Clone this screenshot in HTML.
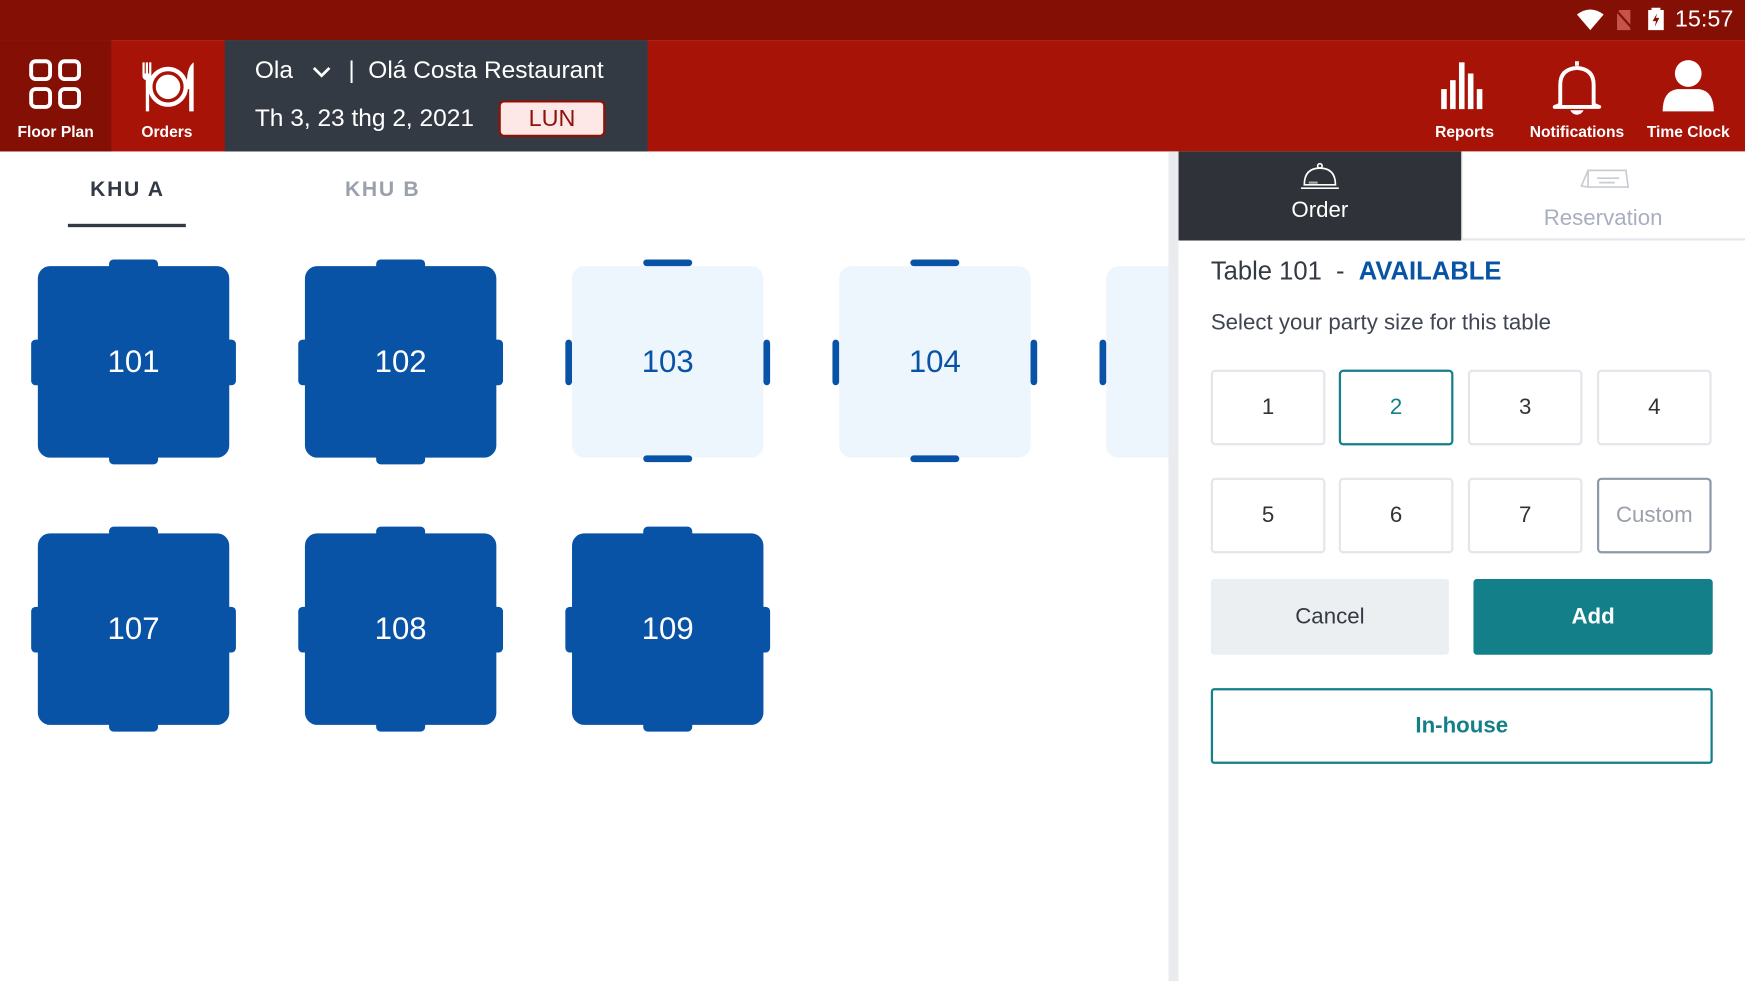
<!DOCTYPE html>
<html><head><meta charset="utf-8"><style>
*{margin:0;padding:0;box-sizing:border-box}
html,body{width:1745px;height:981px;overflow:hidden;background:#fff}
#w{position:absolute;left:0;top:0;width:1568px;height:881px;transform:scale(1.11288,1.1135);transform-origin:0 0;font-family:"Liberation Sans",sans-serif}
.a{position:absolute}
.sb{left:0;top:0;width:1568px;height:36px;background:#830f05}
.top{left:0;top:36px;width:1568px;height:100px;background:#a81308}
.nav{color:#fff;font-size:14px;font-weight:bold;text-align:center}
.t{position:absolute;width:184px;height:184px}
.t .b{position:absolute;left:6px;top:6px;width:172px;height:172px;border-radius:11px;background:#0953a6}
.t .n{position:absolute;background:#0953a6;border-radius:4px}
.t .l{color:#fff;position:absolute;left:0;top:0;width:184px;height:184px;line-height:184px;text-align:center;font-size:28px}
.t.lt .b{background:#eef6fd}
.t.lt .l{color:#0953a6}
.btn{position:absolute;width:103px;height:68px;border:2px solid #e3e6ea;border-radius:4px;text-align:center;line-height:64px;font-size:20px;color:#333}
</style></head><body><div id="w">
<div class="a sb"></div>
<svg class="a" style="left:1416px;top:8px" width="26" height="20" viewBox="0 0 26 20"><path d="M1 5Q13-4 25 5L13 19Z" fill="#fff"/></svg>
<svg class="a" style="left:1451px;top:8px" width="18" height="20" viewBox="0 0 18 20"><path d="M4 1H14V19H2V4Z" fill="#c5544a"/><path d="M1 1L17 19" stroke="#830f05" stroke-width="2"/></svg>
<svg class="a" style="left:1480px;top:6px" width="16" height="22" viewBox="0 0 16 22"><path d="M4 1H12V3H15V21H1V3H4Z" fill="#fff"/><path d="M9 6L5 13H8L7 18L11 10H8Z" fill="#830f05"/></svg>
<div class="a" style="left:1505px;top:6px;color:#fff;font-size:21px">15:57</div>
<div class="a top"></div>
<div class="a" style="left:0;top:36px;width:100px;height:100px;background:#830f05"></div>
<svg class="a" style="left:26px;top:53px" width="48" height="46" viewBox="0 0 48 46"><g fill="none" stroke="#fff" stroke-width="3.5"><rect x="2" y="2" width="17" height="16" rx="4"/><rect x="28" y="2" width="17" height="16" rx="4"/><rect x="2" y="27" width="17" height="16" rx="4"/><rect x="28" y="27" width="17" height="16" rx="4"/></g></svg>
<div class="a nav" style="left:0;top:110px;width:100px">Floor Plan</div>
<svg class="a" style="left:126px;top:54px" width="50" height="48" viewBox="0 0 50 48"><g fill="#fff"><path d="M2 2h2v10h1V2h2v10h1V2h2v12q0 3-2 4v28H5V18q-3-1-3-4z"/><circle cx="25" cy="24" r="16" fill="none" stroke="#fff" stroke-width="4"/><circle cx="25" cy="24" r="11"/><path d="M42 20q0-14 6-18v44h-4V26h-2z"/></g></svg>
<div class="a nav" style="left:100px;top:110px;width:100px">Orders</div>
<div class="a" style="left:202px;top:36px;width:380px;height:100px;background:#343a44"></div>
<div class="a" style="left:229px;top:50px;color:#fff;font-size:22px">Ola</div>
<svg class="a" style="left:280px;top:59px" width="18" height="12" viewBox="0 0 18 12"><path d="M2 2l7 7 7-7" fill="none" stroke="#fff" stroke-width="2.5"/></svg>
<div class="a" style="left:313px;top:50px;color:#fff;font-size:22px">|&nbsp;&nbsp;Olá Costa Restaurant</div>
<div class="a" style="left:229px;top:93px;color:#fff;font-size:22px">Th 3, 23 thg 2, 2021</div>
<div class="a" style="left:448px;top:90px;width:96px;height:33px;background:#fde8e7;border:2px solid #8f1208;border-radius:5px;color:#8f1208;font-size:21px;text-align:center;line-height:29px">LUN</div>
<svg class="a" style="left:1293px;top:52px" width="48" height="48" viewBox="0 0 48 48"><g fill="#fff"><rect x="2" y="28" width="5" height="18"/><rect x="10" y="20" width="5" height="26"/><rect x="18" y="4" width="5" height="42"/><rect x="26" y="14" width="5" height="32"/><rect x="34" y="28" width="5" height="18"/><rect x="40" y="18" width="5" height="28" opacity="0"/></g></svg>
<div class="a nav" style="left:1276px;top:110px;width:80px">Reports</div>
<svg class="a" style="left:1394px;top:52px" width="46" height="52" viewBox="0 0 46 52"><path d="M23 3v4M8 42V24q0-14 15-15 15 1 15 15v18l5 2H3z" fill="none" stroke="#fff" stroke-width="3.5" stroke-linejoin="round"/><path d="M17 47h12q-2 4-6 4t-6-4z" fill="#fff"/></svg>
<div class="a nav" style="left:1367px;top:110px;width:100px">Notifications</div>
<svg class="a" style="left:1492px;top:52px" width="50" height="50" viewBox="0 0 50 50"><circle cx="25" cy="14" r="12" fill="#fff"/><path d="M2 48q0-18 13-20h20q13 2 13 20z" fill="#fff"/></svg>
<div class="a nav" style="left:1467px;top:110px;width:100px">Time Clock</div>

<div class="a" style="left:81px;top:160px;font-size:19px;font-weight:bold;color:#343a44;letter-spacing:1.5px">KHU A</div>
<div class="a" style="left:61px;top:201px;width:106px;height:3px;background:#343a44"></div>
<div class="a" style="left:310px;top:160px;font-size:19px;font-weight:bold;color:#9aa1ab;letter-spacing:1.5px">KHU B</div>

<div class="t" style="left:28px;top:233px"><div class="b"></div><div class="n" style="left:70px;top:0;width:44px;height:184px"></div><div class="n" style="left:0;top:72px;width:184px;height:41px"></div><div class="l">101</div></div>
<div class="t" style="left:268px;top:233px"><div class="b"></div><div class="n" style="left:70px;top:0;width:44px;height:184px"></div><div class="n" style="left:0;top:72px;width:184px;height:41px"></div><div class="l">102</div></div>
<div class="t lt" style="left:508px;top:233px"><div class="b"></div><div class="n" style="left:70px;top:0;width:44px;height:6px"></div><div class="n" style="left:70px;top:176px;width:44px;height:6px"></div><div class="n" style="left:0;top:72px;width:6px;height:41px"></div><div class="n" style="left:178px;top:72px;width:6px;height:41px"></div><div class="l">103</div></div>
<div class="t lt" style="left:748px;top:233px"><div class="b"></div><div class="n" style="left:70px;top:0;width:44px;height:6px"></div><div class="n" style="left:70px;top:176px;width:44px;height:6px"></div><div class="n" style="left:0;top:72px;width:6px;height:41px"></div><div class="n" style="left:178px;top:72px;width:6px;height:41px"></div><div class="l">104</div></div>
<div class="t lt" style="left:988px;top:233px"><div class="b"></div><div class="n" style="left:0;top:72px;width:6px;height:41px"></div></div>
<div class="t" style="left:28px;top:473px"><div class="b"></div><div class="n" style="left:70px;top:0;width:44px;height:184px"></div><div class="n" style="left:0;top:72px;width:184px;height:41px"></div><div class="l">107</div></div>
<div class="t" style="left:268px;top:473px"><div class="b"></div><div class="n" style="left:70px;top:0;width:44px;height:184px"></div><div class="n" style="left:0;top:72px;width:184px;height:41px"></div><div class="l">108</div></div>
<div class="t" style="left:508px;top:473px"><div class="b"></div><div class="n" style="left:70px;top:0;width:44px;height:184px"></div><div class="n" style="left:0;top:72px;width:184px;height:41px"></div><div class="l">109</div></div>

<div class="a" style="left:1050px;top:136px;width:9px;height:745px;background:#e9ebee"></div>
<div class="a" style="left:1059px;top:136px;width:509px;height:745px;background:#fff"></div>
<div class="a" style="left:1059px;top:136px;width:254px;height:80px;background:#2f3238"></div>
<div class="a" style="left:1313px;top:136px;width:255px;height:80px;border-bottom:2px solid #e3e6ea;border-left:1px solid #ccc"></div>
<svg class="a" style="left:1168px;top:145px" width="36" height="26" viewBox="0 0 36 26"><g fill="none" stroke="#fff" stroke-width="1.5"><circle cx="18" cy="4" r="2"/><path d="M4 21q0-15 14-15t14 15z"/><path d="M1 24h34"/></g><rect x="8" y="18" width="8" height="2" fill="#aaa"/></svg>
<div class="a" style="left:1059px;top:178px;width:254px;text-align:center;color:#fff;font-size:20px">Order</div>
<svg class="a" style="left:1419px;top:150px" width="46" height="22" viewBox="0 0 46 22"><g fill="none" stroke="#c9ccd2" stroke-width="1.5"><path d="M8 3H42L44 18H8Z"/><path d="M8 3L2 17L8 18"/><path d="M16 10H36M18 14H32"/></g></svg>
<div class="a" style="left:1313px;top:185px;width:255px;text-align:center;color:#a9aec0;font-size:20px">Reservation</div>
<div class="a" style="left:1088px;top:230px;font-size:23px;color:#343a44">Table 101&nbsp;&nbsp;-&nbsp;&nbsp;<span style="color:#0953a6;font-weight:bold">AVAILABLE</span></div>
<div class="a" style="left:1088px;top:279px;font-size:20px;color:#3f4651">Select your party size for this table</div>
<div class="btn" style="left:1088px;top:332px">1</div>
<div class="btn" style="left:1203px;top:332px;border-color:#137f88;color:#137f88">2</div>
<div class="btn" style="left:1319px;top:332px">3</div>
<div class="btn" style="left:1435px;top:332px">4</div>
<div class="btn" style="left:1088px;top:429px">5</div>
<div class="btn" style="left:1203px;top:429px">6</div>
<div class="btn" style="left:1319px;top:429px">7</div>
<div class="btn" style="left:1435px;top:429px;border-color:#8e99a8;color:#9aa1ab">Custom</div>
<div class="a" style="left:1088px;top:520px;width:214px;height:68px;background:#eceff2;border-radius:3px;text-align:center;line-height:68px;font-size:20px;color:#343a44">Cancel</div>
<div class="a" style="left:1324px;top:520px;width:215px;height:68px;background:#137f88;border-radius:3px;text-align:center;line-height:68px;font-size:20px;color:#fff;font-weight:bold">Add</div>
<div class="a" style="left:1088px;top:618px;width:451px;height:68px;border:2px solid #137f88;border-radius:3px;text-align:center;line-height:64px;font-size:20px;color:#137f88;font-weight:bold">In-house</div>
</div></body></html>
